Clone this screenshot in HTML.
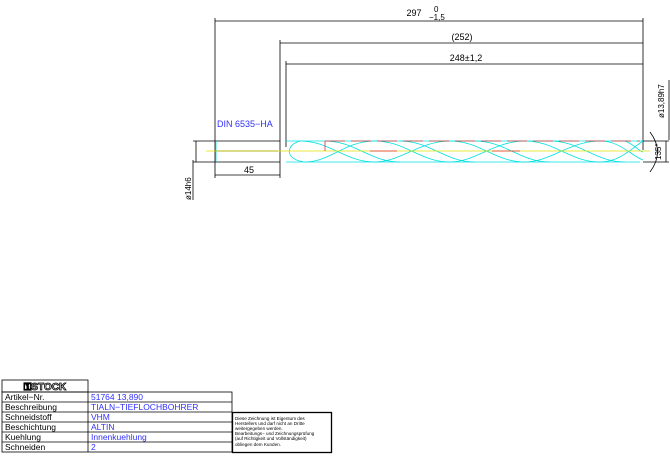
<!DOCTYPE html>
<html><head><meta charset="utf-8"><style>
html,body{margin:0;padding:0;background:#fff;width:670px;height:460px;overflow:hidden}
svg{display:block}
text{font-family:"Liberation Sans",sans-serif}
</style></head><body>
<svg width="670" height="460" viewBox="0 0 670 460" xmlns="http://www.w3.org/2000/svg">
<g stroke="#000" stroke-width="0.8" fill="none">
<line x1="215" y1="18" x2="215" y2="178"/>
<line x1="643" y1="18" x2="643" y2="150"/>
<line x1="215" y1="21" x2="643" y2="21"/>
<line x1="280" y1="40" x2="280" y2="178"/>
<line x1="280" y1="43" x2="643" y2="43"/>
<line x1="286" y1="61" x2="286" y2="147"/>
<line x1="286" y1="64" x2="643" y2="64"/>
<line x1="215" y1="175" x2="280" y2="175"/>
<line x1="193" y1="141" x2="280" y2="141"/>
<line x1="193" y1="162" x2="280" y2="162"/>
<line x1="196" y1="141" x2="196" y2="162"/>
<line x1="193" y1="160" x2="193" y2="200"/>
<line x1="215" y1="151" x2="278" y2="151"/>
<line x1="643" y1="141" x2="669" y2="141"/>
<line x1="643" y1="162" x2="669" y2="162"/>
<line x1="666" y1="141" x2="666" y2="162"/>
<line x1="669" y1="80" x2="669" y2="140"/>
<path d="M650 132 Q665 152 650 172"/>
</g>
<g stroke="#00e0e0" stroke-width="0.8" fill="none">
<line x1="216" y1="141" x2="216" y2="162"/>
<line x1="286" y1="141" x2="643" y2="141"/>
<line x1="286" y1="162" x2="640" y2="162"/>
<path d="M300 141 C285 145 285 160 305 162"/>
<path d="M300 141 C330 141 345 162 375 162 M325 141 C355 141 370 162 400 162 M375 141 C405 141 420 162 450 162 M400 141 C430 141 445 162 475 162 M450 141 C480 141 495 162 525 162 M475 141 C505 141 520 162 550 162 M525 141 C555 141 570 162 600 162 M550 141 C580 141 595 162 625 162 M600 141 C620 141 630 155 643 160 M625 141 C635 145 640 152 643 152"/>
<path d="M305 162 C330 162 345 141 375 141 M375 162 C400 162 420 141 450 141 M450 162 C475 162 495 141 525 141 M525 162 C550 162 570 141 600 141 M600 162 C620 162 632 148 643 141"/>
</g>
<line x1="206" y1="151" x2="650" y2="151" stroke="#e0e000" stroke-width="0.8"/>
<g stroke="#e03030" stroke-width="0.8">
<line x1="325" y1="141" x2="640" y2="141" stroke-dasharray="20 6"/>
<line x1="325" y1="141" x2="325" y2="151"/>
<line x1="370" y1="151" x2="397" y2="151"/>
<line x1="492" y1="151" x2="520" y2="151"/>
</g>
<g font-size="9" fill="#000">
<text x="414" y="16" text-anchor="middle">297</text>
<text x="434" y="12" font-size="8">0</text>
<text x="429" y="20" font-size="8">−1,5</text>
<text x="462" y="40" text-anchor="middle">(252)</text>
<text x="466" y="61" text-anchor="middle">248±1,2</text>
<text x="249" y="173" text-anchor="middle">45</text>
<text transform="translate(191,200) rotate(-90)" font-size="8">ø14h6</text>
<text transform="translate(664,118) rotate(-90)" font-size="8">ø13,89h7</text>
<text transform="translate(661,160) rotate(-90)" font-size="8">135°</text>
</g>
<text x="217" y="127" font-size="9" fill="#3030ff">DIN 6535−HA</text>
<g stroke="#000" stroke-width="0.8" fill="none">
<rect x="2" y="380" width="86" height="12"/>
<rect x="2" y="392" width="230" height="60"/>
<line x1="88" y1="392" x2="88" y2="452"/>
<line x1="2" y1="402" x2="232" y2="402"/>
<line x1="2" y1="412" x2="232" y2="412"/>
<line x1="2" y1="422" x2="232" y2="422"/>
<line x1="2" y1="432" x2="232" y2="432"/>
<line x1="2" y1="442" x2="232" y2="442"/>
<rect x="232.5" y="412.5" width="99" height="40" stroke-width="1.3"/>
</g>
<text x="45" y="390" font-size="10" font-weight="bold" text-anchor="middle" fill="#fff" stroke="#000" stroke-width="0.8">⚿STOCK</text>
<g font-size="8.5" fill="#000">
<text x="5" y="400">Artikel−Nr.</text>
<text x="5" y="410">Beschreibung</text>
<text x="5" y="420">Schneidstoff</text>
<text x="5" y="430">Beschichtung</text>
<text x="5" y="440">Kuehlung</text>
<text x="5" y="450">Schneiden</text>
</g>
<g font-size="8.5" fill="#3030ff">
<text x="91" y="400">51764  13,890</text>
<text x="91" y="410">TIALN−TIEFLOCHBOHRER</text>
<text x="91" y="420">VHM</text>
<text x="91" y="430">ALTIN</text>
<text x="91" y="440">Innenkuehlung</text>
<text x="91" y="450">2</text>
</g>
<g font-size="4.6" fill="#000">
<text x="235" y="420">Diese Zeichnung ist Eigentum des</text>
<text x="235" y="425">Herstellers und darf nicht an Dritte</text>
<text x="235" y="430">weitergegeben werden.</text>
<text x="235" y="435">Bearbeitungs− und Zeichnungsprüfung</text>
<text x="235" y="440">(auf Richtigkeit und Vollständigkeit)</text>
<text x="235" y="446">obliegen dem Kunden.</text>
</g>
</svg>
</body></html>
